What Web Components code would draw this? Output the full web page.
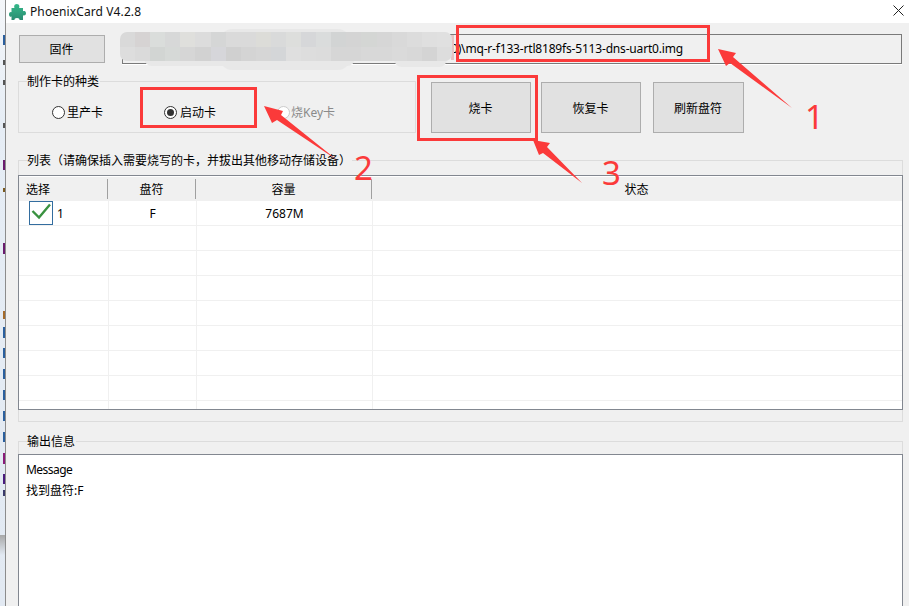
<!DOCTYPE html>
<html lang="zh">
<head>
<meta charset="utf-8">
<title>PhoenixCard</title>
<style>
  html, body { margin: 0; height: 100%; background: #e6edf5; }
  body { display: flex; overflow: hidden; font: 12px "Noto Sans", "Noto Sans CJK SC", sans-serif; color: #000; }
  phoenix-window { flex: 1; min-width: 0; }
</style>
</head>
<body>

<desktop-strip></desktop-strip>

<phoenix-window>
  <win-titlebar slot="title">PhoenixCard V4.2.8</win-titlebar>

  <win-button slot="firmware" w="86" h="28">固件</win-button>
  <path-field slot="firmware">0)\mq-r-f133-rtl8189fs-5113-dns-uart0.img</path-field>

  <win-group slot="cardtype" label="制作卡的种类">
    <div style="display:flex;height:43px;align-items:center;padding:3px 0 0 33px;box-sizing:border-box">
      <win-radio style="width:112px">里产卡</win-radio>
      <win-radio style="width:113px" checked>启动卡</win-radio>
      <win-radio disabled>烧Key卡</win-radio>
    </div>
  </win-group>
  <win-button slot="actions" w="100" h="51">烧卡</win-button>
  <win-button slot="actions" w="100" h="51">恢复卡</win-button>
  <win-button slot="actions" w="91" h="51" style="margin-left:2px">刷新盘符</win-button>

  <win-group slot="list" label="列表（请确保插入需要烧写的卡，并拔出其他移动存储设备）">
    <card-table>
      <card-row checked num="1" drive="F" size="7687M"></card-row>
      <card-row></card-row><card-row></card-row><card-row></card-row>
      <card-row></card-row><card-row></card-row><card-row></card-row><card-row></card-row>
      <card-row></card-row>
    </card-table>
  </win-group>

  <win-group slot="output" label="输出信息" style="height:100%">
    <message-box>
      <div style="letter-spacing:-.55px">Message</div>
      <div>找到盘符:F</div>
    </message-box>
  </win-group>
</phoenix-window>

<blur-patch></blur-patch>

<red-box style="left:456px;top:25px;width:254px;height:37px"></red-box>
<red-box style="left:140px;top:87px;width:117px;height:41px"></red-box>
<red-box style="left:417px;top:75px;width:121px;height:66px"></red-box>

<red-arrows></red-arrows>

<red-num style="left:805px;top:98px">1</red-num>
<red-num style="left:354px;top:149px">2</red-num>
<red-num style="left:602px;top:154px">3</red-num>

<script>
// The sliver of desktop left of the window, with the cut-off text of what lies behind it
class DesktopStrip extends HTMLElement {
  constructor() {
    super();
    this.attachShadow({ mode: 'open' });
    const marks = [
      [35, 10, '#2a5f9e'], [60, 5, '#555'], [80, 5, '#555'], [123, 5, '#555'], [160, 10, '#6a1b6e'],
      [188, 4, '#7a5a20'], [243, 11, '#6a1b6e'], [311, 8, '#a56a2a'], [327, 11, '#2a5f9e'],
      [348, 10, '#2a5f9e'], [369, 10, '#2a5f9e'], [390, 10, '#2a5f9e'], [411, 10, '#2a5f9e'],
      [432, 10, '#2a5f9e'], [453, 11, '#8a1b7a'], [474, 10, '#4a1b7e'], [490, 6, '#3a3a6a']
    ];
    this.shadowRoot.innerHTML = `
      <style>
        :host { display: block; flex: none; position: relative; width: 5px; height: 606px; background: linear-gradient(#f4f6f9, #e6edf5 20%, #e2e9f2); }
        i { position: absolute; right: 0; width: 2px; }
        .shade { position: absolute; left: 0; top: 535px; width: 5px; height: 20px; background: linear-gradient(#a8a8a8, #e2e9f2); }
      </style>
      ${marks.map(m => `<i style="top:${m[0]}px;height:${m[1]}px;background:${m[2]}"></i>`).join('')}
      <div class="shade"></div>`;
  }
}

class PhoenixWindow extends HTMLElement {
  constructor() {
    super();
    this.attachShadow({ mode: 'open' });
    this.shadowRoot.innerHTML = `
      <style>
        :host { display: flex; flex-direction: column; height: 606px; border-left: 1px solid #8c8c8c; background: #f0f0f0; overflow: hidden; }
        .row1 { display: flex; gap: 17px; margin: 12px 7px 0 13px; align-items: flex-start; }
        .row2 { display: flex; margin: 17px 7px 0 12px; }
        .cardtype { width: 398px; }
        .actions { display: flex; gap: 10px; margin: 1px 0 0 15px; }
        .list { margin: 27px 6px 0 12px; }
        .output { flex: 1; margin: 19px 6px 0 12px; min-height: 0; }
      </style>
      <slot name="title"></slot>
      <div class="row1"><slot name="firmware"></slot></div>
      <div class="row2">
        <div class="cardtype"><slot name="cardtype"></slot></div>
        <div class="actions"><slot name="actions"></slot></div>
      </div>
      <div class="list"><slot name="list"></slot></div>
      <div class="output"><slot name="output"></slot></div>`;
  }
}

class WinTitlebar extends HTMLElement {
  constructor() {
    super();
    this.attachShadow({ mode: 'open' });
    this.shadowRoot.innerHTML = `
      <style>
        :host { display: flex; align-items: center; height: 23px; background: #fff; padding-left: 3px; font-size: 12px; letter-spacing: .1px; color: #111; }
        svg { flex: none; }
        .logo { margin-right: 4px; }
        .txt { flex: 1; }
        .close { margin-right: 5px; margin-bottom: 3px; }
      </style>
      <svg class="logo" width="17" height="18" viewBox="0 0 17 18">
        <defs><linearGradient id="g" x1="0" y1="0" x2="0" y2="1"><stop offset="0" stop-color="#35b98a"/><stop offset="1" stop-color="#2c8c72"/></linearGradient></defs>
        <path fill="url(#g)" d="M2.500 5h3C5 4 4.700 1 7.800 1s2.800 3 2.300 4H14v3.200c1-.5 3-.3 3 2s-2 2.500-3 2V17h-3.600c.4-1-.2-2-2.400-2s-2.800 1-2.400 2H2.500v-3.400C1.500 14 0 13.500 0 11.400S1.500 8.800 2.500 9.200z"/>
      </svg>
      <span class="txt"><slot></slot></span>
      <svg class="close" width="11" height="11" viewBox="0 0 11 11"><path d="M.5.500l10 10M10.500.500l-10 10" stroke="#222" fill="none"/></svg>`;
  }
}

class WinButton extends HTMLElement {
  constructor() {
    super();
    this.attachShadow({ mode: 'open' });
    const w = this.getAttribute('w');
    const h = this.getAttribute('h');
    this.shadowRoot.innerHTML = `
      <style>
        :host { display: flex; flex: none; align-items: center; justify-content: center; box-sizing: border-box; width: ${w}px; height: ${h}px; padding-right: 1px; background: #e1e1e1; border: 1px solid #adadad; font-size: 12px; }
      </style>
      <slot></slot>`;
  }
}

class PathField extends HTMLElement {
  constructor() {
    super();
    this.attachShadow({ mode: 'open' });
    this.shadowRoot.innerHTML = `
      <style>
        :host { display: flex; align-items: center; flex: 1; box-sizing: border-box; height: 30px; margin-top: -1px; border: 1px solid #7a7a7a; box-shadow: 0 1px #fff; background: #f0f0f0; padding: 0 0 1px 328px; white-space: nowrap; letter-spacing: -.18px; }
      </style>
      <slot></slot>`;
  }
}

class WinGroup extends HTMLElement {
  constructor() {
    super();
    this.attachShadow({ mode: 'open' });
    this.shadowRoot.innerHTML = `
      <style>
        :host { display: block; box-sizing: border-box; border: 1px solid #dcdcdc; }
        .label { width: fit-content; height: 14px; line-height: 14px; margin: -7px 0 0 8px; padding: 0 1px 0 0; background: #f0f0f0; white-space: nowrap; }
      </style>
      <div class="label">${this.getAttribute('label')}</div>
      <slot></slot>`;
  }
}

class WinRadio extends HTMLElement {
  constructor() {
    super();
    this.attachShadow({ mode: 'open' });
    this.shadowRoot.innerHTML = `
      <style>
        :host { display: flex; align-items: center; gap: 2px; flex: none; }
        :host([disabled]) { color: #8a8a8a; gap: 1px; }
        :host([checked]) { gap: 3px; }
        .dot { box-sizing: border-box; width: 13px; height: 13px; border-radius: 50%; border: 1px solid #333; background: #fff; display: flex; align-items: center; justify-content: center; }
        :host([disabled]) .dot { border-color: #ccc; }
        :host([checked]) .dot::after { content: ""; width: 7px; height: 7px; border-radius: 50%; background: #333; }
      </style>
      <span class="dot"></span><slot></slot>`;
  }
}

class CardTable extends HTMLElement {
  constructor() {
    super();
    this.attachShadow({ mode: 'open' });
    this.shadowRoot.innerHTML = `
      <style>
        :host { display: block; box-sizing: border-box; height: 235px; margin: 7px -1px 11px; border: 1px solid #828790; overflow: hidden; background: #fff; }
        .head { display: grid; grid-template-columns: 89px 88px 176px 1fr; box-sizing: border-box; height: 25px; background: #f0f0f0; border-top: 1px solid #fff; text-align: center; line-height: 26px; }
        .head div { position: relative; padding-right: 1px; }
        .head div:first-child { text-align: left; padding-left: 7px; }
        .head div + div::before { content: ""; position: absolute; left: -1px; top: 2px; height: 20px; width: 1px; background: #a0a0a0; }
      </style>
      <div class="head"><div>选择</div><div>盘符</div><div>容量</div><div>状态</div></div>
      <slot></slot>`;
  }
}

class CardRow extends HTMLElement {
  constructor() {
    super();
    this.attachShadow({ mode: 'open' });
    const num = this.getAttribute('num') || '';
    const check = this.hasAttribute('checked') ? `
      <span class="box"><svg width="24" height="24" viewBox="0 0 24 24"><path d="M3.500 10l6.500 6.500L21 3.500" fill="none" stroke="#3a9240" stroke-width="2.400"/></svg></span>` : '';
    this.shadowRoot.innerHTML = `
      <style>
        :host { display: grid; grid-template-columns: 89px 88px 176px 1fr; height: 25px; box-sizing: border-box; border-bottom: 1px solid #f0f0f0; text-align: center; line-height: 25px; }
        .c + .c { border-left: 1px solid #f0f0f0; }
        .first { display: flex; align-items: flex-start; gap: 4px; padding-left: 10px; }
        .box { box-sizing: border-box; width: 24px; height: 24px; border: 1px solid #336d9f; display: block; flex: none; }
        svg { display: block; margin: -1px; }
      </style>
      <div class="c first">${check}<span>${num}</span></div>
      <div class="c">${this.getAttribute('drive') || ''}</div>
      <div class="c">${this.getAttribute('size') || ''}</div>
      <div class="c"></div>`;
  }
}

class MessageBox extends HTMLElement {
  constructor() {
    super();
    this.attachShadow({ mode: 'open' });
    this.shadowRoot.innerHTML = `
      <style>
        :host { display: block; box-sizing: border-box; height: 200px; margin: 5px -1px 0; border: 1px solid #828790; background: #fff; padding: 4px 7px; line-height: 21px; }
      </style>
      <slot></slot>`;
  }
}

// Smudge that hides the firmware folder in the reference
class BlurPatch extends HTMLElement {
  constructor() {
    super();
    this.attachShadow({ mode: 'open' });
    const top = 'd9d9d9,d6d3d3,dadddb,d7d8d8,dfdfdc,dcdcdc,d5d6d6,dadada,dadada,dcdcd8,d9dada,dddedc,d6d7d9,dadcdc,d2d4d4,d4d4d4,d4d6d4,d6d6d6,d9d9d9,dcdcdc,dfdfdf,e0e0e0'.split(',');
    const bottom = 'dddddd,dadada,d2d5d3,d6d9d7,d6d6d6,d2d2d2,d6d6da,d0d0d0,d4d4d4,d6d6d6,d4d6d8,dfdfdf,dddddd,dcdcdc,d6d6d6,d6d6d6,d8d8d8,d8d8d8,dadada,d8d8d8,d4d4d4,dddddd'.split(',');
    const cells = top.concat(bottom).map(c => `<i style="background:#${c}"></i>`).join('');
    this.shadowRoot.innerHTML = `
      <style>
        :host { position: absolute; left: 120px; top: 32px; width: 332px; height: 29px; }
        .halo { position: absolute; left: 100px; top: -3px; width: 130px; height: 41px; background: #e8e8e8; border-radius: 12px; }
        .halo2 { position: absolute; left: 24px; top: 5px; width: 211px; height: 29px; background: #e8e8e8; border-radius: 8px; }
        .halo3 { position: absolute; left: 274px; top: 5px; width: 53px; height: 30px; background: #e8e8e8; border-radius: 8px; }
        .grid { position: absolute; inset: 0; display: grid; grid-template-columns: repeat(22, 1fr); grid-auto-rows: 1fr; border-radius: 7px; overflow: hidden; }
        .edge { position: absolute; right: -2px; top: 3px; width: 3px; height: 25px; background: #e4c4c4; }
      </style>
      <div class="halo"></div><div class="halo2"></div><div class="halo3"></div><div class="edge"></div><div class="grid">${cells}</div>`;
  }
}

class RedBox extends HTMLElement {
  constructor() {
    super();
    this.attachShadow({ mode: 'open' });
    this.shadowRoot.innerHTML = `<style>:host { position: absolute; box-sizing: border-box; border: 3px solid #fb3a3a; }</style>`;
  }
}

class RedArrows extends HTMLElement {
  constructor() {
    super();
    this.attachShadow({ mode: 'open' });
    this.shadowRoot.innerHTML = `
      <style>:host { position: absolute; left: 0; top: 0; width: 909px; height: 606px; pointer-events: none; } svg { display: block; }</style>
      <svg width="909" height="606" viewBox="0 0 909 606" fill="#fb3a3a">
        <polygon points="718,49 736,53 733,57 792,108 730,63 726,66"/>
        <polygon points="533,140 550,143 547,147 582,183 543,153 539,155"/>
        <polygon points="264,106 283,111 281,115 337,160 277,120 272,123"/>
      </svg>`;
  }
}

class RedNum extends HTMLElement {
  constructor() {
    super();
    this.attachShadow({ mode: 'open' });
    this.shadowRoot.innerHTML = `<style>:host { position: absolute; font: 33px/38px "Noto Sans", sans-serif; color: #fb3a3a; }</style><slot></slot>`;
  }
}

customElements.define('desktop-strip', DesktopStrip);
customElements.define('phoenix-window', PhoenixWindow);
customElements.define('win-titlebar', WinTitlebar);
customElements.define('win-button', WinButton);
customElements.define('path-field', PathField);
customElements.define('win-group', WinGroup);
customElements.define('win-radio', WinRadio);
customElements.define('card-table', CardTable);
customElements.define('card-row', CardRow);
customElements.define('message-box', MessageBox);
customElements.define('blur-patch', BlurPatch);
customElements.define('red-box', RedBox);
customElements.define('red-arrows', RedArrows);
customElements.define('red-num', RedNum);
</script>
</body>
</html>
